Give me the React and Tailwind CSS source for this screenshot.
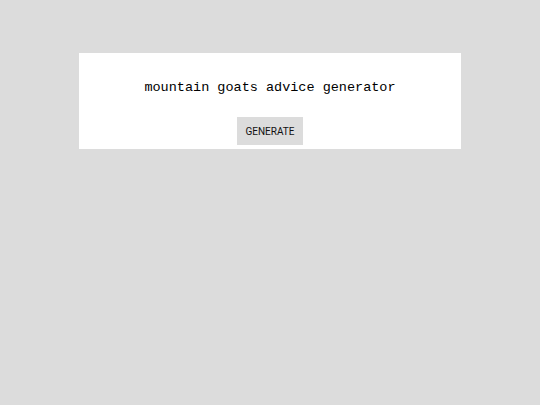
export default function App() {
  return (
    <div className="min-h-[405px] bg-[#dcdcdc] pt-[53px] font-['Liberation_Mono',monospace]">
      <div className="mx-auto flex w-[382px] flex-col items-center bg-white pt-[27px] pb-[4px]">
        <h1 className="text-[13.5px] leading-[16px] text-black">mountain goats advice generator</h1>
        <button className="mt-[21px] h-[28px] w-[66px] bg-[#dcdcdc] font-['Roboto',sans-serif] text-[10px] text-[#111]">
          GENERATE
        </button>
      </div>
    </div>
  );
}
